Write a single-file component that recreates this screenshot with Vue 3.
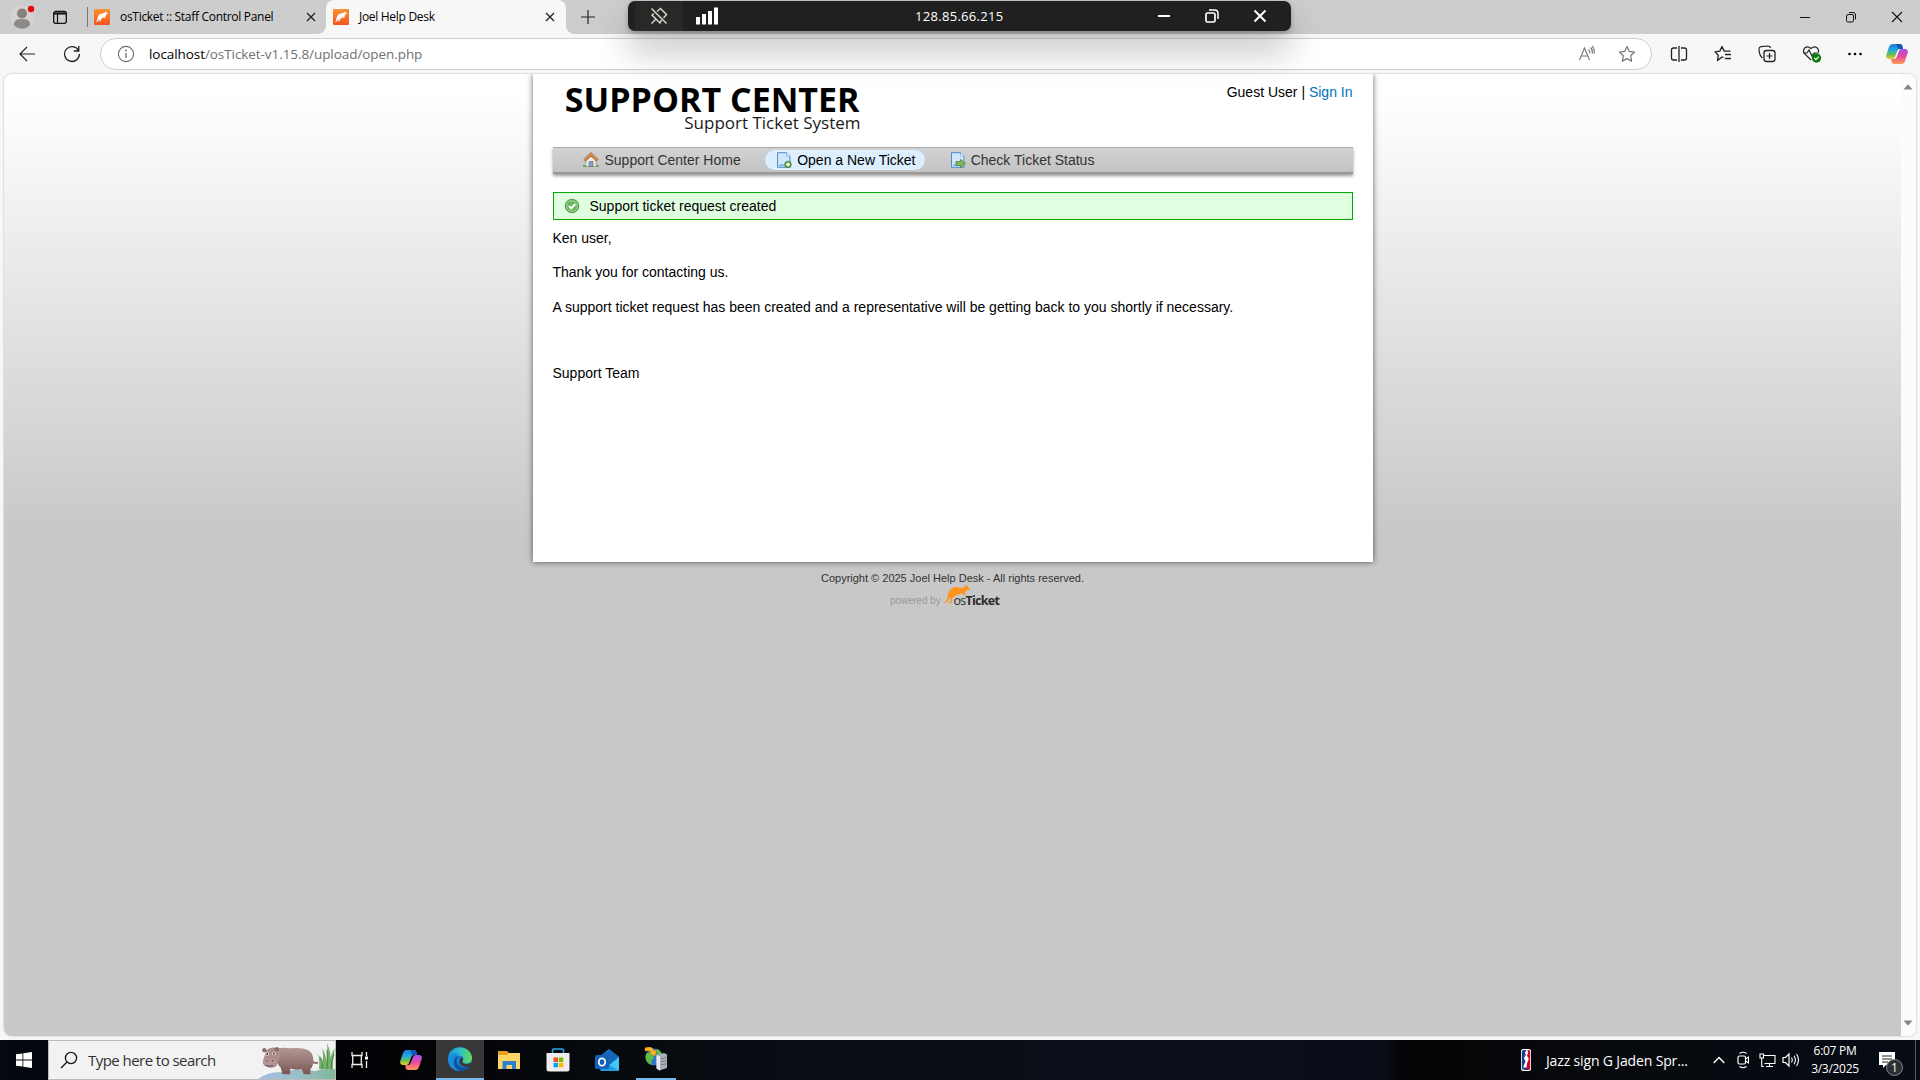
<script setup>
const url = { host: 'localhost', path: '/osTicket-v1.15.8/upload/open.php' }
const tabs = [
  { title: 'osTicket :: Staff Control Panel', active: false },
  { title: 'Joel Help Desk', active: true },
]
</script>

<template>
  <div class="screen">
    <header class="tabstrip">
      <svg class="avatar" width="28" height="28" viewBox="0 0 28 28">
        <circle cx="14" cy="14" r="11.5" fill="#d6d3cf" />
        <circle cx="14" cy="10.5" r="5" fill="#85817e" />
        <path d="M6 22c0-5 3-6 8-6s8 1 8 6c-4 5-12 5-16 0z" fill="#8e8a87" />
        <circle cx="23" cy="6" r="3.2" fill="#e00b0b" />
      </svg>
      <svg class="workspace" width="16" height="16" viewBox="0 0 16 16">
        <rect x="1.7" y="2.5" width="12.6" height="11.8" rx="2" fill="none" stroke="#111" stroke-width="1.3" />
        <path d="M2 3.5h12v2H2z" fill="#111" /><path d="M5.5 5v9" stroke="#111" stroke-width="1.2" />
      </svg>
      <i class="sep"></i>
      <div v-for="t in tabs" :key="t.title" class="tab" :class="{ active: t.active }">
        <svg width="16" height="16" viewBox="0 0 16 16">
          <defs><linearGradient id="fav" x1="0" y1="0" x2="0" y2="1"><stop stop-color="#f99332" /><stop offset="1" stop-color="#f0541e" /></linearGradient></defs>
          <rect width="16" height="16" rx="1" fill="url(#fav)" />
          <path d="M1.500 13.500C4 12.500 2.500 8 5.500 5.500 7.500 4 9 4.700 11 3.500l1.300-1.200.4 1.200 1.500 1-1.700.8-1.300 2.700.6 1-2-.6-2 .9L6.500 12l-1.300 1 .6-3C4.500 10.500 4 13.500 1.500 13.500z" fill="#fff" />
        </svg>
        <span>{{ t.title }}</span>
        <svg class="x" width="10" height="10" viewBox="0 0 10 10"><path d="M1 1l8 8M9 1l-8 8" stroke="#222" stroke-width="1.3" /></svg>
      </div>
      <svg class="plus" width="16" height="16" viewBox="0 0 16 16"><path d="M8 1v14M1 8h14" stroke="#222" stroke-width="1.200" /></svg>
      <div class="wincontrols">
        <svg width="12" height="12" viewBox="0 0 12 12"><path d="M1 6.500h10" stroke="#111" /></svg>
        <svg width="12" height="12" viewBox="0 0 12 12"><rect x="1.500" y="3.500" width="7" height="7.500" rx="1.500" fill="none" stroke="#111" /><path d="M4 1.500h4q2.500 0 2.500 2.500v4.500" fill="none" stroke="#111" /></svg>
        <svg width="12" height="12" viewBox="0 0 12 12"><path d="M1 1l10 10M11 1L1 11" stroke="#111" stroke-width="1.100" /></svg>
      </div>
    </header>

    <div class="toolbar">
      <svg class="back" width="18" height="18" viewBox="0 0 18 18"><path d="M17 9H2M9 2L2 9l7 7" fill="none" stroke="#222" stroke-width="1.200" /></svg>
      <svg class="reload" width="18" height="18" viewBox="0 0 18 18"><path d="M15.500 5.500A7.400 7.400 0 1 0 16.400 9M15.800 1v5h-5" fill="none" stroke="#222" stroke-width="1.300" /></svg>
      <div class="address">
        <svg class="info" width="18" height="18" viewBox="0 0 18 18"><circle cx="9" cy="9" r="7.600" fill="none" stroke="#6d6d6d" stroke-width="1.100" /><path d="M9 8v5" stroke="#6d6d6d" stroke-width="1.300" /><circle cx="9" cy="5.500" r=".9" fill="#6d6d6d" /></svg>
        <span class="url">{{ url.host }}<em>{{ url.path }}</em></span>
        <svg class="read" width="18" height="18" viewBox="0 0 18 18"><path d="M1.500 15L6.500 3l5 12M3.200 11h6.600M10.500 4.500q1.500 1.500 1.200 4M12.500 2.500q2.400 2.200 1.800 6M14 1q3 2.500 2 8" fill="none" stroke="#767676" stroke-width="1.100" /></svg>
        <svg class="star" width="18" height="18" viewBox="0 0 18 18"><path d="M9 1.500l2.300 4.900 5.200.7-3.800 3.700.9 5.300L9 13.600l-4.600 2.500.9-5.300L1.500 7.100l5.200-.7z" fill="none" stroke="#767676" stroke-width="1.200" stroke-linejoin="round" /></svg>
      </div>
      <div class="tools">
        <svg width="18" height="18" viewBox="0 0 18 18"><path d="M7 3H3.500q-2 0-2 2v8q0 2 2 2H7M11 3h3.500q2 0 2 2v8q0 2-2 2H11M9 1v16" fill="none" stroke="#222" stroke-width="1.300" /></svg>
        <svg width="18" height="18" viewBox="0 0 18 18"><path d="M9.500 12.500L8 12l-4.500 3.500.8-5.300L1 6.900l4.800-.8L8 1.500l2.200 4.600h6.300M11 9.500h6M11 13.500h6" fill="none" stroke="#222" stroke-width="1.300" stroke-linejoin="round" /></svg>
        <svg width="18" height="18" viewBox="0 0 18 18"><rect x="6" y="5.500" width="11" height="11" rx="2.500" fill="none" stroke="#222" stroke-width="1.300" /><path d="M11.500 8v6M8.500 11h6M4.500 13C2 11 1 7 1 4q0-2 2-2.300L10 1q2 0 2.500 2" fill="none" stroke="#222" stroke-width="1.200" /></svg>
        <svg width="20" height="18" viewBox="0 0 20 18"><path d="M9 15L2.300 8.500Q.5 5 3 2.700q3-2 6 .8 3-2.800 6-.8 2.500 2.300 1 5.300M1 8h4l2-3 3 6 2-3h3" fill="none" stroke="#222" stroke-width="1.200" /><circle cx="14.500" cy="13" r="4.700" fill="#107c10" /><path d="M12.300 13l1.600 1.600 2.800-3" fill="none" stroke="#fff" stroke-width="1.200" /></svg>
        <svg width="18" height="18" viewBox="0 0 18 18"><circle cx="3.500" cy="9" r="1.300" /><circle cx="9" cy="9" r="1.300" /><circle cx="14.500" cy="9" r="1.300" /></svg>
        <svg width="22" height="20" viewBox="0 0 22 20">
          <defs>
            <linearGradient id="cpA" x1="0" y1="0" x2="0" y2="1"><stop stop-color="#1b7fdc" /><stop offset=".4" stop-color="#22a9d8" /><stop offset=".7" stop-color="#6ebf5a" /><stop offset="1" stop-color="#f3c61c" /></linearGradient>
            <linearGradient id="cpB" x1="0" y1="0" x2="0" y2="1"><stop stop-color="#a84cf0" /><stop offset=".5" stop-color="#e94b9c" /><stop offset="1" stop-color="#ff9c50" /></linearGradient>
          </defs>
          <g id="copilot">
            <path d="M11 0h3q1.800 0 2.300 1.800L17 5h-3q-2 0-2.700 2L9 13q-.7 2-2.700 2H3q-3.500 0-2.700-4L3 3q1-3 4-3z" fill="url(#cpA)" />
            <path d="M10 0h4q1.800 0 2.300 1.800L17 5h-3.500C11 5 11.500 2 10 0z" fill="#1754b5" />
            <path d="M11 20H8q-1.800 0-2.300-1.800L5.300 15H8q2 0 2.700-2L13 7q.7-2 2.700-2H19q3.500 0 2.700 4L19 17q-1 3-4 3z" fill="url(#cpB)" />
          </g>
        </svg>
      </div>
    </div>

    <div class="viewport">
      <div class="page">
        <main class="container">
          <div class="head">
            <div class="logo"><b>SUPPORT CENTER</b><span>Support Ticket System</span></div>
            <p class="guest">Guest User | <a>Sign In</a></p>
          </div>
          <nav class="nav">
            <a class="home">
              <svg width="16" height="16" viewBox="0 0 16 16"><path d="M0 13h16v2H0z" fill="#5fae6c" /><path d="M3 8l5-5 5 5v6.500H3z" fill="#f4ede3" stroke="#a88c77" stroke-width=".6" /><path d="M6 9.500h4v5H6z" fill="#85a5cc" stroke="#6c6c78" stroke-width=".7" /><path d="M1.500 8.500L8 2.300l6.500 6.200" fill="none" stroke="#8e5425" stroke-width="3" /><path d="M1.500 8.300L8 2.100l6.500 6.200" fill="none" stroke="#dc9a4f" stroke-width="1.600" /></svg>
              Support Center Home
            </a>
            <a class="open">
              <svg width="16" height="16" viewBox="0 0 16 16"><path d="M1.500.7h9L14 4v11.300H1.500z" fill="#cfe6fb" stroke="#4f8bc9" /><path d="M10.500.7V4H14" fill="#fff" stroke="#75a8dc" stroke-width=".8" /><path d="M3 12.500h7v1.300H3z" fill="#56a8eb" /><circle cx="12" cy="12.500" r="3.300" fill="#649d48" stroke="#457b32" stroke-width=".7" /><path d="M12 10.500v4M10 12.500h4" stroke="#fff" stroke-width="1.400" /></svg>
              Open a New Ticket
            </a>
            <a class="check">
              <svg width="16" height="16" viewBox="0 0 16 16"><path d="M1.500.7h9L14 4v11.300H1.500z" fill="#cfe6fb" stroke="#4f8bc9" /><path d="M10.500.7V4H14" fill="#fff" stroke="#75a8dc" stroke-width=".8" /><path d="M3 12.500h4v1.300H3z" fill="#56a8eb" /><path d="M6 9.500h4.500V7.300l5 4.200-5 4.200v-2.200H6z" fill="#80b760" stroke="#4b8435" stroke-width=".8" /></svg>
              Check Ticket Status
            </a>
          </nav>
          <div class="notice">
            <svg width="16" height="16" viewBox="0 0 16 16"><circle cx="8" cy="8" r="6.800" fill="#68b65b" stroke="#438e43" stroke-width=".8" /><circle cx="8" cy="8" r="5.300" fill="none" stroke="#b2dba9" stroke-width=".8" /><path d="M5 8l2.200 2.300L11.300 6" fill="none" stroke="#fff" stroke-width="1.900" /></svg>
            Support ticket request created
          </div>
          <div class="message">
            <p>Ken user,</p>
            <p>Thank you for contacting us.</p>
            <p class="body">A support ticket request has been created and a representative will be getting back to you shortly if necessary.</p>
            <p class="team">Support Team</p>
          </div>
        </main>
        <footer class="footer">
          <p>Copyright © 2025 Joel Help Desk - All rights reserved.</p>
          <div class="powered">
            <span>powered by</span>
            <div class="brand">
              <svg width="27" height="20" viewBox="0 0 27 20"><path d="M0 18.800C4.500 18.500 4 13 5.500 9 7.500 4 11.500 2.300 15 3.200c2 .5 3.500 1.300 5 .8l2-1.500-.3-2.300L23.500 2l1.500-.5.2 2L27 5l-1 1-3 .7-1.500 3L23 11.500l-2.500-.8-1-1.400-4 1.200-2.700 1L9.500 14l-1.300 5.500H5.500L7.500 17l-.3-4.500C5.500 15 5.300 20 0 18.800z" fill="#ff941a" /></svg>
              <b><i>os</i>Ticket</b>
            </div>
          </div>
        </footer>
      </div>
      <div class="scrollbar">
        <svg width="10" height="6" viewBox="0 0 10 6"><path d="M5 .3L9.500 5.500h-9z" fill="#858585" /></svg>
        <svg width="10" height="6" viewBox="0 0 10 6"><path d="M5 5.700L.5.500h9z" fill="#858585" /></svg>
      </div>
    </div>

    <div class="rdp">
      <div class="pin"><svg width="18" height="18" viewBox="0 0 18 18"><path d="M1.500 1.500l15 15M7 4.500l3.500-3 6 6-3 3.500M4 6.500l-2 1.500 8 8 1.500-3M6 12l-4.500 4.500" fill="none" stroke="#d4d2cf" stroke-width="1.500" /></svg></div>
      <svg class="signal" width="22" height="18" viewBox="0 0 22 18"><path d="M0 10h4v7.500H0zM6 7h4v10.500H6zM12 4h4v13.500h-4zM18 .500h4v17h-4z" fill="#fff" /></svg>
      <span>128.85.66.215</span>
      <div class="rdpctl">
        <svg width="14" height="14" viewBox="0 0 14 14"><path d="M1 7h12" stroke="#fff" stroke-width="2" /></svg>
        <svg width="14" height="14" viewBox="0 0 14 14"><rect x="1" y="4" width="9" height="9" rx="1.500" fill="none" stroke="#fff" stroke-width="1.700" /><path d="M4 1h5.500Q13 1 13 4.500V10" fill="none" stroke="#fff" stroke-width="1.500" /></svg>
        <svg width="14" height="14" viewBox="0 0 14 14"><path d="M1.500 1.500l11 11M12.500 1.500l-11 11" stroke="#fff" stroke-width="2" /></svg>
      </div>
    </div>

    <div class="taskbar">
      <div class="start"><svg width="16" height="16" viewBox="0 0 16 16"><path d="M0 2.300L6.500 1.400v6.200H0zM7.300 1.300L16 0v7.600H7.300zM0 8.400h6.500v6.200L0 13.700zM7.300 8.400H16V16l-8.700-1.300z" fill="#fff" /></svg></div>
      <div class="search">
        <svg width="18" height="18" viewBox="0 0 18 18"><circle cx="11" cy="7" r="5.600" fill="none" stroke="#111" stroke-width="1.300" /><path d="M7 11l-6 6" stroke="#111" stroke-width="1.300" /></svg>
        <span>Type here to search</span>
        <svg class="hippo" width="78" height="38" viewBox="0 0 78 38">
          <defs>
            <linearGradient id="hide" x1="0" y1="0" x2="0" y2="1"><stop stop-color="#b39794" /><stop offset=".55" stop-color="#957674" /><stop offset="1" stop-color="#775653" /></linearGradient>
            <linearGradient id="ground"><stop stop-color="#a5bde0" /><stop offset=".5" stop-color="#9abfcc" /><stop offset="1" stop-color="#82b898" /></linearGradient>
          </defs>
          <path d="M1 38q9-7 23-7 18-4 34-1 8-3 20-2v10z" fill="url(#ground)" />
          <path d="M62 28Q63 16 60 12q5 6 5 11Q67 14 65 7q5 8 4 15Q71 10 70 2q5 11 3 19 1-9 5-14-2 8-2 21z" fill="#76b069" />
          <path d="M65 28Q66 20 63 16M70 28Q71 17 70 9M74 28Q74 20 77 13" fill="none" stroke="#4a8f4b" stroke-width="1.200" />
          <g transform="translate(3.500 .5) scale(.96)">
            <path d="M49 16q5 8 11 6" fill="none" stroke="#8c6c69" stroke-width="2" />
            <path d="M16 7q8-1 15 0 12-1 19 2 6 4 5 14-1 4-3 6v5h-7l-2-5q-6 1-12-1v6h-8l-2-7Q17 24 16 16z" fill="url(#hide)" />
            <path d="M6 9q6-5 12-1l3 6-2 5-2 6q-4 4-11 1-5-2-3-7z" fill="#ab8d8a" />
            <circle cx="4" cy="9" r="2.300" fill="#8e6e6c" /><circle cx="17" cy="8" r="2.300" fill="#8e6e6c" />
            <circle cx="7" cy="13" r="1.900" fill="#f1e8d9" /><circle cx="14" cy="12.500" r="1.900" fill="#f1e8d9" /><circle cx="7" cy="13" r="1" fill="#332b2b" /><circle cx="14" cy="12.500" r="1" fill="#332b2b" />
            <ellipse cx="9.500" cy="21.500" rx="7" ry="4.500" fill="#b39492" /><path d="M6 20h1.500M12 20h1.500M5 25q4 1.500 8 0" stroke="#5b4040" fill="none" />
          </g>
        </svg>
      </div>
      <div class="apps">
        <div class="app"><svg width="18" height="18" viewBox="0 0 18 18"><path d="M1 1v3.500h10V1M1 17v-3.500h10V17M1.700 4.500v9M10.300 4.500v9M15.500 1v4M15.500 10v7" fill="none" stroke="#eee" stroke-width="1.300" /><path d="M14 5.500h3v3h-3z" fill="#fff" /></svg></div>
        <div class="app cop"><svg width="22" height="20" viewBox="0 0 22 20"><use href="#copilot" /></svg></div>
        <div class="app edge on">
          <svg width="24" height="24" viewBox="0 0 24 24">
            <defs><linearGradient id="edgeA"><stop stop-color="#1d91db" /><stop offset=".5" stop-color="#2dc1c8" /><stop offset="1" stop-color="#6bda4b" /></linearGradient></defs>
            <circle cx="12" cy="12" r="12" fill="#157ecf" />
            <path d="M.3 10C2-2 21-3 24 10c.5 5-3 7-7 6.500-2.500-.5-3.500-1.500-2-3 1.500-3-1-5-4-5-4 0-9 1-10.700 1.500z" fill="url(#edgeA)" />
            <path d="M.3 10C2 6 9 5.500 12 7.500c-5 0-7 4-6 8 1 4 4 7.300 8 8C6 25-1 19 .3 10z" fill="#1b8ddd" />
            <path d="M11 9c-4 3-3 9 2 11 3.500 1.500 7 .3 9.500-1.500C20.500 22 17 24 13 24 8 23 5 19 6 14c.5-3 2.500-4.500 5-5z" fill="#0d519d" />
            <path d="M14.500 14c-.5 2 1.500 3 4 3 2 0 4-.7 5-2l-.7 3.700c-4 2.300-9.300 1.300-11-2.200-1-2.500 0-5 2-6.500 1.200 1.200 1.700 2.500.7 4z" fill="#383838" />
          </svg>
        </div>
        <div class="app"><svg width="22" height="18" viewBox="0 0 22 18"><path d="M0 0h9l2 2h11v16H0z" fill="#e7a21a" /><path d="M0 4h9l2-2h11v16H0z" fill="#ffd567" /><path d="M4.500 10h13.500v8h-4v-4H8.500v4h-4z" fill="#2f80d0" /></svg></div>
        <div class="app"><svg width="24" height="24" viewBox="0 0 24 24"><path d="M6.500 6V2q0-1 1-1h9q1 0 1 1v4" fill="none" stroke="#29a8e9" stroke-width="1.600" /><path d="M.5 5h23v16q0 2.500-2.500 2.500H3Q.5 23.500.5 21z" fill="#ededed" /><path d="M7.500 9.500H12V14H7.500z" fill="#f25022" /><path d="M12.800 9.500h4.500V14h-4.500z" fill="#7fba00" /><path d="M7.500 14.800H12v4.500H7.500z" fill="#00a4ef" /><path d="M12.800 14.800h4.500v4.500h-4.500z" fill="#ffb900" /></svg></div>
        <div class="app"><svg width="24" height="24" viewBox="0 0 24 24"><path d="M4 9L14 1l10 8v12q0 2-2 2H6z" fill="#1687db" /><path d="M6 8l8.500-6L22 8v6l-9 4z" fill="#1565b8" /><path d="M24 9v12q0 2-2 2H7z" fill="#43c8f5" /><path d="M6 12l17 10q-.7 1-2 1H7q-2 0-2-2z" fill="#1f9ce8" /><rect y="7" width="14" height="14" rx="1.500" fill="#0f61ba" /><ellipse cx="7" cy="14" rx="3.200" ry="3.700" fill="none" stroke="#fff" stroke-width="1.700" /></svg></div>
        <div class="app srv"><svg width="24" height="24" viewBox="0 0 24 24"><circle cx="10" cy="10" r="8.500" fill="#2c75d2" /><path d="M3 6l5 1 2 4-3 3 1 4Q1 16 1.500 9zM13 2q5 2 5.500 8l-4 1-2-4z" fill="#5bbd42" /><path d="M12.500 8l7.500-2 3 1.500V21l-7.500 2.500-3-2z" fill="#a9aeb6" /><path d="M12.500 8l3.500 1.500v14l-3.500-2z" fill="#e4e7eb" /><path d="M17 12l5-1.200M17 15l5-1.200M17 18l5-1.200" stroke="#757c87" /><path d="M1 1q7-3 9 3l2.500-1-1.500 6-6-3 2.500-1Q6 3 1 4z" fill="#ffb71c" stroke="#e08b00" stroke-width=".5" /></svg></div>
      </div>
      <div class="tray">
        <svg class="nba" width="10" height="22" viewBox="0 0 10 22"><rect width="10" height="22" rx="2.500" fill="#fff" /><path d="M.8 3q0-2 2-2H5.500L4 3.500 4.800 6 3 9l1.500 3.500L2.500 17v3.500H2q-1.200 0-1.200-1.500z" fill="#17408b" /><path d="M6.500 1h.7q2 0 2 2v16q0 2-2 2H5.500l.3-6 2-5L6 6.500 7 4z" fill="#c9082a" /><path d="M2.500 18.500h3.500V21H2.500z" fill="#17408b" /></svg>
        <span class="news">Jazz sign G Jaden Spr...</span>
        <svg class="chev" width="12" height="8" viewBox="0 0 12 8"><path d="M.7 7L6 1.500 11.300 7" fill="none" stroke="#fff" stroke-width="1.400" /></svg>
        <svg class="cam" width="13" height="18" viewBox="0 0 13 18"><rect x="1" y="5" width="7.500" height="8" rx="1.500" fill="none" stroke="#fff" stroke-width="1.200" /><path d="M8.500 8L11.500 6v6l-3-2M2.500 2.500q3.500-2.500 7 0M2.500 15.500q3.500 2.500 7 0" fill="none" stroke="#fff" stroke-width="1.100" /></svg>
        <svg class="mon" width="17" height="16" viewBox="0 0 17 16"><path d="M4.500 3.500h11.500v8H5.500M10.500 11.500v3M7 14.500h7M1 2h3.500v4H1zM2.700 6v8.500h2" fill="none" stroke="#fff" stroke-width="1.100" /></svg>
        <svg class="vol" width="18" height="16" viewBox="0 0 18 16"><path d="M1 5.500h2.500L7 2v12l-3.500-3.500H1z" fill="none" stroke="#fff" stroke-width="1.200" /><path d="M9.500 5.500q1.500 2.500 0 5M12 3.700q2.800 4.300 0 8.600M14.500 2q4 6 0 12" fill="none" stroke="#fff" stroke-width="1.100" /></svg>
        <div class="clock"><span>6:07 PM</span><span>3/3/2025</span></div>
        <div class="notif"><svg width="26" height="28" viewBox="0 0 26 28"><path d="M0 2h16v13H7l-3 3v-3H0z" fill="#fff" /><path d="M3 6h10M3 9h10M3 12h6" stroke="#222" /><circle cx="15.500" cy="17.500" r="8" fill="#2d2f33" stroke="#85888c" /></svg><b>1</b></div>
        <i class="peek"></i>
      </div>
    </div>
  </div>
</template>

<style>
body { margin: 0; overflow: hidden; }
</style>

<style scoped>
* { box-sizing: border-box; }
p { margin: 0; }
svg { display: block; flex: none; }
.screen { position: relative; width: 1920px; height: 1080px; display: flex; flex-direction: column; overflow: hidden; background: #f7f7f7; font-family: "Open Sans", "Noto Sans", sans-serif; white-space: nowrap; color: #000; }

.tabstrip { height: 34px; flex: none; background: #cdcdcd; display: flex; align-items: center; }
.avatar { margin-left: 8px; }
.workspace { margin-left: 16px; }
.sep { width: 1px; height: 20px; margin-left: 19px; background: #777; }
.tab { position: relative; width: 238px; height: 34px; padding: 0 10px 0 6px; display: flex; align-items: center; font-size: 12px; letter-spacing: -.3px; }
.tab span { margin-left: 10px; flex: 1; padding-bottom: 1px; }
.tab.active { width: 240px; padding: 0 11px 0 7px; background: #f7f7f7; border-radius: 8px 8px 0 0; }
.tab.active::before, .tab.active::after { content: ""; position: absolute; bottom: 0; width: 8px; height: 8px; }
.tab.active::before { left: -8px; background: radial-gradient(circle at 0 0, transparent 7.5px, #f7f7f7 8px); }
.tab.active::after { right: -8px; background: radial-gradient(circle at 100% 0, transparent 7.5px, #f7f7f7 8px); }
.plus { margin-left: 14px; }
.wincontrols { margin-left: auto; margin-right: 17px; display: flex; gap: 34px; }

.toolbar { height: 40px; flex: none; display: flex; align-items: center; }
.back { margin-left: 18px; }
.reload { margin-left: 27px; }
.address { margin-left: 19px; width: 1552px; height: 32px; border: 1px solid #cfcfcf; border-radius: 16px; background: #fff; display: flex; align-items: center; }
.info { margin-left: 16px; }
.url { margin-left: 14px; font-size: 13.500px; letter-spacing: -.07px; flex: 1; }
.url em { font-style: normal; color: #717171; }
.read { margin-right: 22px; }
.star { margin-right: 15px; }
.tools { margin-left: 18px; display: flex; align-items: center; gap: 26px; }
.tools svg:nth-child(4) { margin-right: -2px; }
.tools svg:nth-child(6) { margin-left: -4px; }

.viewport { width: 1912px; height: 962px; flex: none; margin-left: 4px; border-radius: 8px; overflow: hidden; display: flex; box-shadow: 0 0 2px rgba(0,0,0,.3); }
.page { flex: 1; background: #c8c8c8 linear-gradient(#fff 20px, #c8c8c8) 0 0 / 100% 460px no-repeat; display: flex; flex-direction: column; align-items: center; font-family: "Liberation Sans", Arial, sans-serif; font-size: 14px; }
.container { width: 840px; height: 488px; padding: 0 20px; background: #fff; box-shadow: 0 0 6px rgba(0,0,0,.6); }
.head { height: 73px; display: flex; justify-content: space-between; }
.logo { width: 308px; display: flex; flex-direction: column; align-items: flex-end; font-family: "Open Sans", "Noto Sans", sans-serif; }
.logo b { margin-top: 12px; padding-right: 1px; font-size: 34px; line-height: 26px; }
.logo span { font-size: 17px; line-height: 22px; color: #1a1a1a; }
.guest { margin-top: 10px; line-height: 16px; }
.guest a { color: #0072bc; }
.nav { height: 27px; background: linear-gradient(#d2d2d2, #c3c3c3); border-top: 1px solid #aaa; border-bottom: 2px solid #989898; box-shadow: 0 2px 3px rgba(0,0,0,.4); display: flex; align-items: center; color: #333; }
.nav a { height: 20px; display: flex; align-items: center; }
.nav svg { margin-right: 5px; }
.home { margin-left: 30px; }
.nav .home svg { margin-right: 6px; }
.open { width: 160px; margin-left: 24.5px; padding-left: 11px; border-radius: 10px; background: #dbefff; color: #000; }
.check { margin-left: 24.500px; }
.notice { height: 28px; margin-top: 18px; border: 1px solid #0a0; background: #e0ffe0; display: flex; align-items: center; padding-left: 10px; }
.notice svg { margin-right: 10px; }
.message { padding-top: 10px; }
.message p { line-height: 16px; margin-bottom: 18px; }
.message .body { margin-top: 19px; }
.message .team { margin-top: 50px; }
.footer { margin-top: 9px; display: flex; flex-direction: column; align-items: center; font-size: 11px; color: #333; }
.footer p { line-height: 14px; }
.powered { display: flex; height: 24px; margin-top: 0; margin-right: 16px; color: #999; }
.powered > span { padding-top: 10px; font-size: 10px; line-height: 12px; letter-spacing: -.1px; }
.brand { display: flex; margin-left: 2px; }
.brand svg { margin-top: -1px; }
.brand b { margin: 8px 0 0 -16px; position: relative; font: 700 12.500px/15px "Open Sans", sans-serif; letter-spacing: -.75px; color: #2c2c2c; }
.brand i { font-style: normal; font-weight: 400; }
.scrollbar { width: 15px; background: #fcfcfc; display: flex; flex-direction: column; align-items: center; justify-content: space-between; padding: 10px 1px 10px 0; }

.rdp { position: absolute; left: 628px; top: 1px; width: 663px; height: 30px; border-radius: 7px; background: #202020; box-shadow: 0 20px 34px rgba(0,0,0,.24), 0 2px 5px rgba(0,0,0,.25); display: flex; align-items: center; color: #fff; font-size: 13px; letter-spacing: .3px; }
.pin { width: 48px; height: 30px; margin-left: 7px; background: #2a2826; display: flex; align-items: center; justify-content: center; }
.signal { margin-left: 13px; }
.rdp span { margin-left: 197px; }
.rdpctl { margin-left: auto; margin-right: 24px; display: flex; gap: 34px; }

.taskbar { height: 40px; flex: none; margin-top: 4px; display: flex; background: linear-gradient(90deg, #050810, #020305 20%, #090d13 40%, #0b0f1a 60%, #0b0e18 72%, #030405 73%, #07090c 82%, #070b14); color: #fff; }
.start { width: 48px; display: flex; align-items: center; justify-content: center; }
.search { width: 288px; height: 40px; background: #f2f2f2; border: 1px solid #bbb; display: flex; align-items: center; padding-left: 11px; color: #333; font-size: 15px; letter-spacing: -.55px; }
.search span { margin-left: 10px; flex: 1; }
.apps { display: flex; }
.app { width: 48px; height: 40px; margin-right: 1px; display: flex; align-items: center; justify-content: center; }
.app.cop { margin-left: 2px; }
.app.edge { background: #383838; border-bottom: 2px solid #76b9ed; }
.app.srv { width: 40px; margin-left: 4px; border-bottom: 2px solid #76b9ed; }
.tray { margin-left: auto; width: 399px; display: flex; align-items: center; }
.news { margin-left: 15px; width: 142px; font-size: 14px; letter-spacing: -.15px; }
.chev { margin-left: 25px; }
.cam { margin-left: 12px; }
.mon { margin-left: 9px; }
.vol { margin-left: 6px; }
.clock { width: 56px; margin-left: 7px; display: flex; flex-direction: column; align-items: center; font-size: 12px; line-height: 18px; letter-spacing: -.3px; }
.notif { position: relative; margin-left: 16px; margin-top: 7px; }
.notif b { position: absolute; left: 12px; top: 9px; font-size: 12px; line-height: 17px; font-weight: 400; }
.peek { width: 1px; height: 40px; margin-left: auto; margin-right: 4px; background: #555a62; }
</style>
